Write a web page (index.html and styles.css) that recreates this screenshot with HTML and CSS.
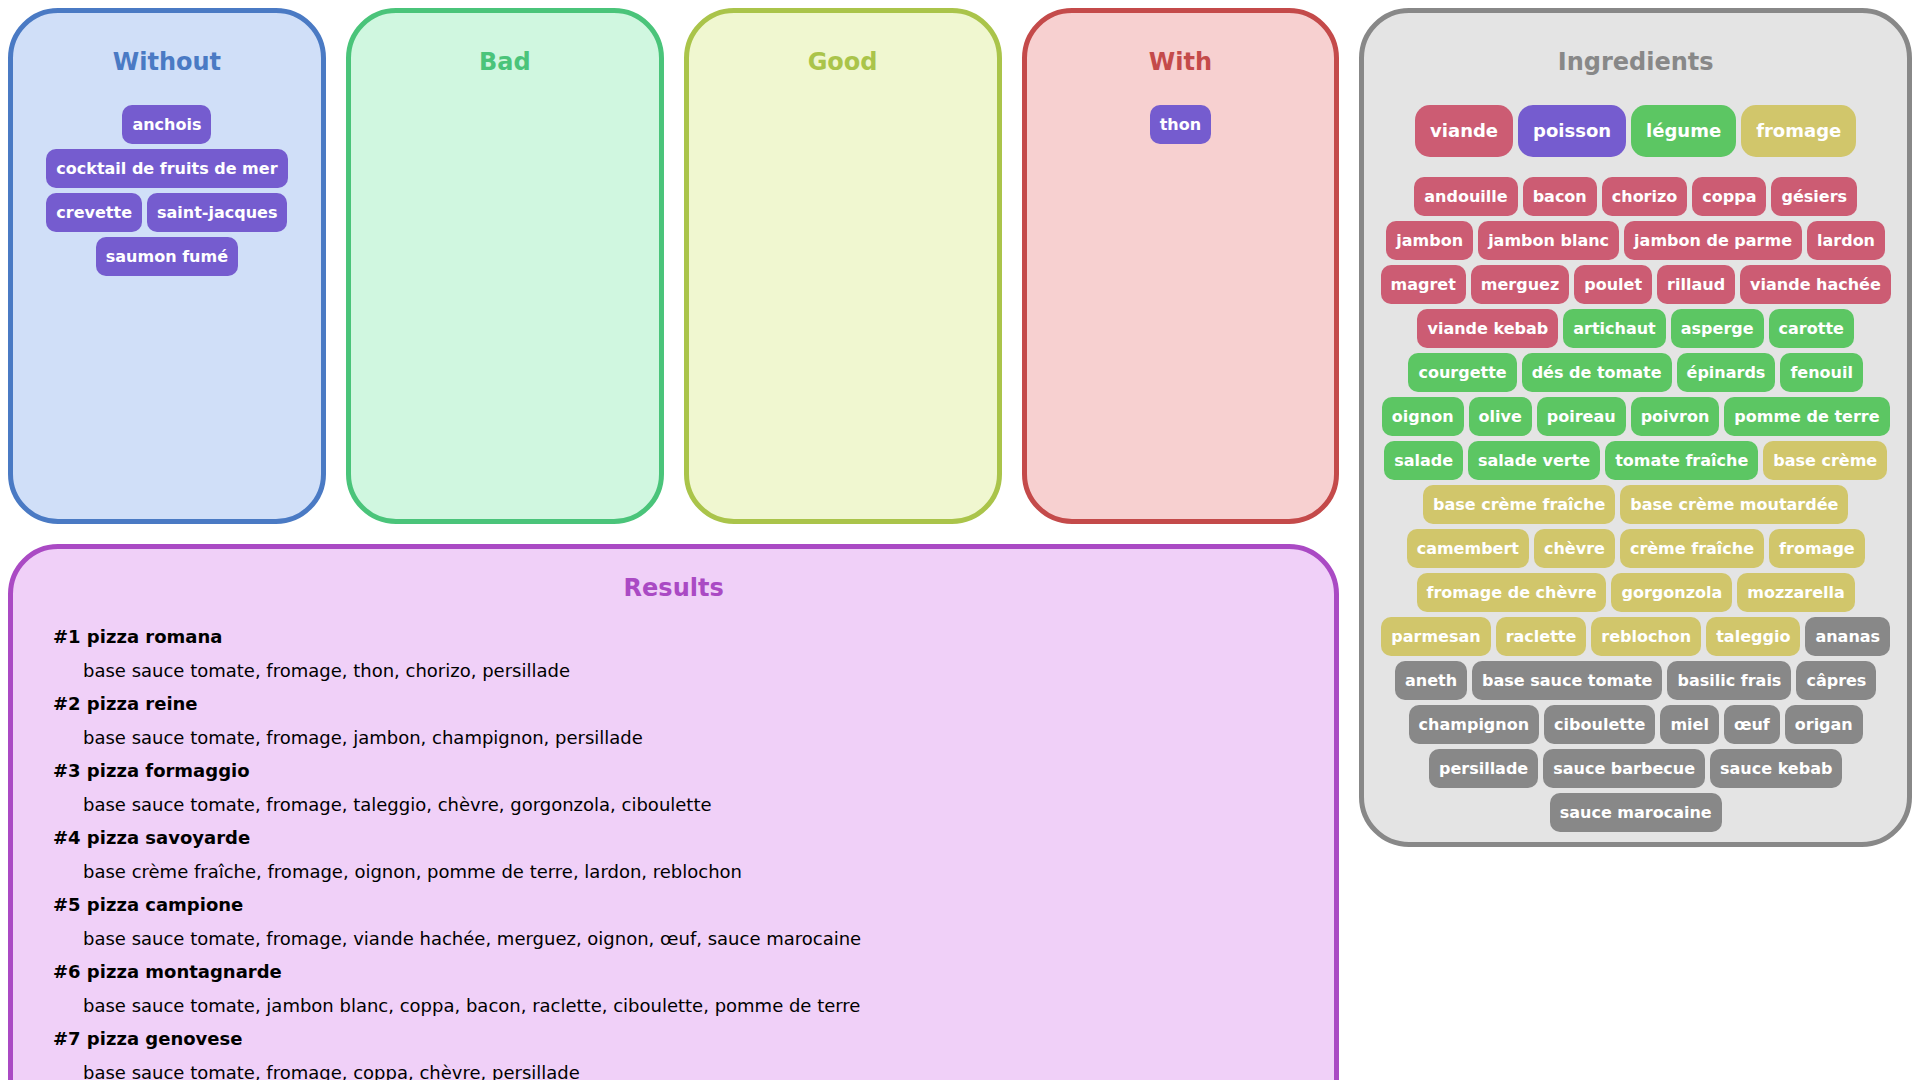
FILE: index.html
```
<!DOCTYPE html>
<html lang="fr">
<head>
<meta charset="utf-8">
<title>Pizzas</title>
<link rel="stylesheet" href="styles.css">
</head>
<body>
<main class="layout">
  <div class="main-column">
    <div class="choices">
      <section class="panel panel-without">
        <h2 class="title">Without</h2>
        <div class="pills">
          <button class="pill fish">anchois</button>
          <button class="pill fish">cocktail de fruits de mer</button>
          <button class="pill fish">crevette</button>
          <button class="pill fish">saint-jacques</button>
          <button class="pill fish">saumon fumé</button>
        </div>
      </section>
      <section class="panel panel-bad">
        <h2 class="title">Bad</h2>
      </section>
      <section class="panel panel-good">
        <h2 class="title">Good</h2>
      </section>
      <section class="panel panel-with">
        <h2 class="title">With</h2>
        <div class="pills">
          <button class="pill fish">thon</button>
        </div>
      </section>
    </div>
    <section class="panel panel-results">
      <h2 class="title">Results</h2>
      <dl class="results">
        <dt>#1 pizza romana</dt>
        <dd>base sauce tomate, fromage, thon, chorizo, persillade</dd>
        <dt>#2 pizza reine</dt>
        <dd>base sauce tomate, fromage, jambon, champignon, persillade</dd>
        <dt>#3 pizza formaggio</dt>
        <dd>base sauce tomate, fromage, taleggio, chèvre, gorgonzola, ciboulette</dd>
        <dt>#4 pizza savoyarde</dt>
        <dd>base crème fraîche, fromage, oignon, pomme de terre, lardon, reblochon</dd>
        <dt>#5 pizza campione</dt>
        <dd>base sauce tomate, fromage, viande hachée, merguez, oignon, œuf, sauce marocaine</dd>
        <dt>#6 pizza montagnarde</dt>
        <dd>base sauce tomate, jambon blanc, coppa, bacon, raclette, ciboulette, pomme de terre</dd>
        <dt>#7 pizza genovese</dt>
        <dd>base sauce tomate, fromage, coppa, chèvre, persillade</dd>
      </dl>
    </section>
  </div>
  <aside class="panel panel-ingredients">
    <h2 class="title">Ingredients</h2>
    <div class="pills categories">
      <button class="pill category meat">viande</button>
      <button class="pill category fish">poisson</button>
      <button class="pill category vegetable">légume</button>
      <button class="pill category cheese">fromage</button>
    </div>
    <div class="pills">
      <button class="pill meat">andouille</button>
      <button class="pill meat">bacon</button>
      <button class="pill meat">chorizo</button>
      <button class="pill meat">coppa</button>
      <button class="pill meat">gésiers</button>
      <button class="pill meat">jambon</button>
      <button class="pill meat">jambon blanc</button>
      <button class="pill meat">jambon de parme</button>
      <button class="pill meat">lardon</button>
      <button class="pill meat">magret</button>
      <button class="pill meat">merguez</button>
      <button class="pill meat">poulet</button>
      <button class="pill meat">rillaud</button>
      <button class="pill meat">viande hachée</button>
      <button class="pill meat">viande kebab</button>
      <button class="pill vegetable">artichaut</button>
      <button class="pill vegetable">asperge</button>
      <button class="pill vegetable">carotte</button>
      <button class="pill vegetable">courgette</button>
      <button class="pill vegetable">dés de tomate</button>
      <button class="pill vegetable">épinards</button>
      <button class="pill vegetable">fenouil</button>
      <button class="pill vegetable">oignon</button>
      <button class="pill vegetable">olive</button>
      <button class="pill vegetable">poireau</button>
      <button class="pill vegetable">poivron</button>
      <button class="pill vegetable">pomme de terre</button>
      <button class="pill vegetable">salade</button>
      <button class="pill vegetable">salade verte</button>
      <button class="pill vegetable">tomate fraîche</button>
      <button class="pill cheese">base crème</button>
      <button class="pill cheese">base crème fraîche</button>
      <button class="pill cheese">base crème moutardée</button>
      <button class="pill cheese">camembert</button>
      <button class="pill cheese">chèvre</button>
      <button class="pill cheese">crème fraîche</button>
      <button class="pill cheese">fromage</button>
      <button class="pill cheese">fromage de chèvre</button>
      <button class="pill cheese">gorgonzola</button>
      <button class="pill cheese">mozzarella</button>
      <button class="pill cheese">parmesan</button>
      <button class="pill cheese">raclette</button>
      <button class="pill cheese">reblochon</button>
      <button class="pill cheese">taleggio</button>
      <button class="pill">ananas</button>
      <button class="pill">aneth</button>
      <button class="pill">base sauce tomate</button>
      <button class="pill">basilic frais</button>
      <button class="pill">câpres</button>
      <button class="pill">champignon</button>
      <button class="pill">ciboulette</button>
      <button class="pill">miel</button>
      <button class="pill">œuf</button>
      <button class="pill">origan</button>
      <button class="pill">persillade</button>
      <button class="pill">sauce barbecue</button>
      <button class="pill">sauce kebab</button>
      <button class="pill">sauce marocaine</button>
    </div>
  </aside>
</main>
</body>
</html>
```
FILE: styles.css
```
* {
  box-sizing: border-box;
}

body {
  margin: 8px;
  background: #fff;
  color: #000;
  font-family: "DejaVu Sans", sans-serif;
  font-size: 18px;
}

.layout {
  display: grid;
  grid-template-columns: minmax(0, 53fr) minmax(0, 22fr);
  gap: 20px;
  align-items: start;
}

.main-column {
  display: grid;
  gap: 20px;
}

.choices {
  display: grid;
  grid-template-columns: repeat(4, minmax(0, 1fr));
  gap: 20px;
}

.choices .panel {
  min-height: 516px;
}

.panel {
  padding: 35px 10px 10px;
  border: 5px solid;
  border-radius: 50px;
}

.panel-without {
  border-color: #4a7ac4;
  background: #d0dff8;
  color: #4a7ac4;
}

.panel-bad {
  border-color: #4ac47a;
  background: #d0f7e0;
  color: #4ac47a;
}

.panel-good {
  border-color: #aac44a;
  background: #f0f7d0;
  color: #aac44a;
}

.panel-with {
  border-color: #c44a4a;
  background: #f7d0d0;
  color: #c44a4a;
}

.panel-results {
  padding: 25px 40px 40px;
  border-color: #aa4ac4;
  background: #f0d0f8;
  color: #aa4ac4;
}

.panel-ingredients {
  border-color: #888;
  background: #e4e4e4;
  color: #888;
}

.title {
  margin: 0 0 29px;
  font-size: 24px;
  line-height: 28px;
  text-align: center;
}

.panel-results .title {
  margin-bottom: 18px;
}

.pills {
  display: flex;
  flex-wrap: wrap;
  justify-content: center;
  gap: 5px;
}

.categories {
  margin-bottom: 20px;
}

.pill {
  padding: 10px;
  border: 0;
  border-radius: 10px;
  background: #888;
  color: #fff;
  font: bold 16px/19px "DejaVu Sans", sans-serif;
  cursor: pointer;
}

.category {
  padding: 15px;
  border-radius: 15px;
  font-size: 18px;
  line-height: 22px;
}

.meat {
  background: #cc5c73;
}

.fish {
  background: #755ccf;
}

.vegetable {
  background: #5cc663;
}

.cheese {
  background: #d1c66b;
}

.results {
  margin: 0;
  color: #000;
}

.results dt {
  font-weight: bold;
  line-height: 34px;
}

.results dd {
  margin: 0 0 0 30px;
  line-height: 33px;
}
```
